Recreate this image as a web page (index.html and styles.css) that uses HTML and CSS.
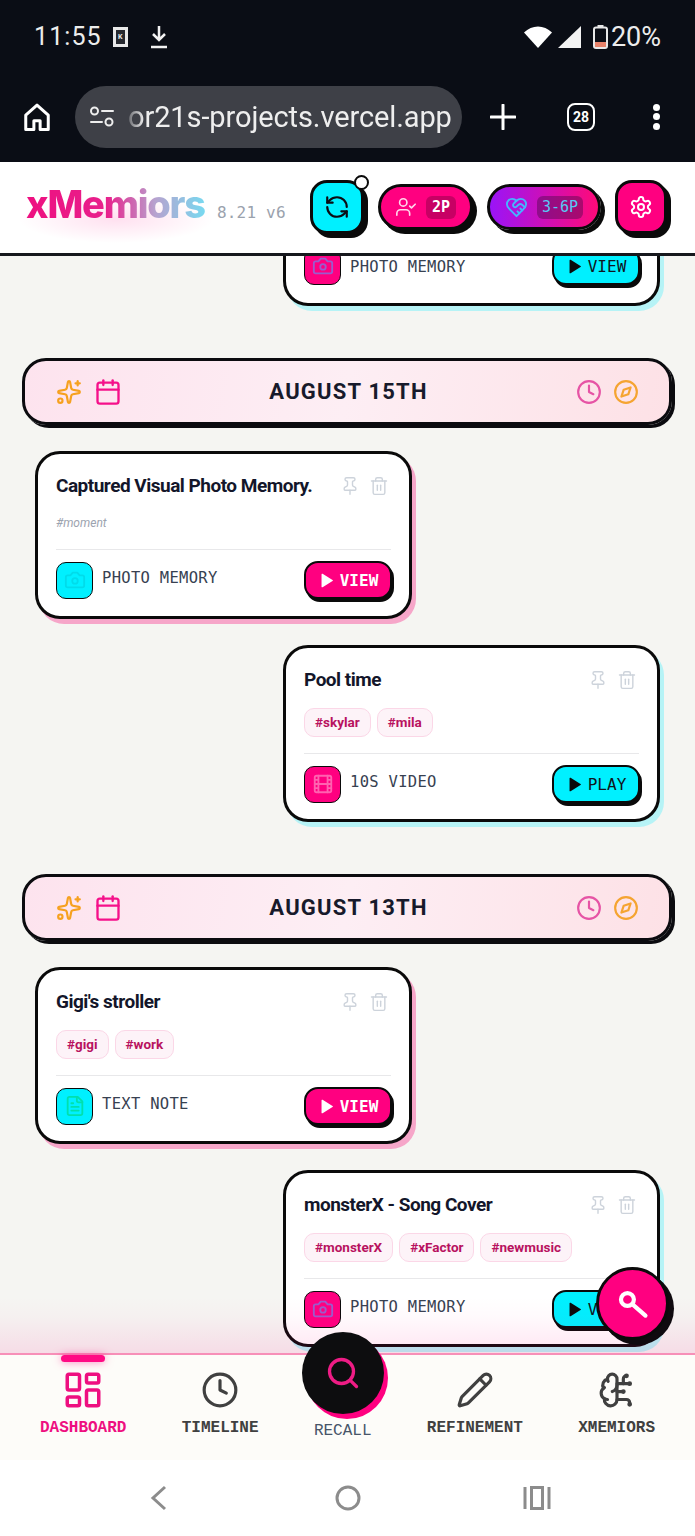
FILE: index.html
```html
<!DOCTYPE html>
<html lang="en">
<head>
<meta charset="utf-8">
<title>xMemiors</title>
<link rel="stylesheet" href="styles.css">
</head>
<body>
<svg class="defs" width="0" height="0" aria-hidden="true">
  <symbol id="i-home" viewBox="0 0 24 24"><path d="M3 10.5 12 2.5l9 8V22h-6.5v-7h-5v7H3z"/></symbol>
  <symbol id="i-sliders" viewBox="0 0 28 24"><circle cx="6.500" cy="6" r="3.500"/><path d="M14 6h11M3 17h11"/><circle cx="21" cy="17" r="3.500"/></symbol>
  <symbol id="i-refresh" viewBox="0 0 24 24"><path d="M21 12a9 9 0 0 0-9-9 9.750 9.750 0 0 0-6.740 2.740L3 8"/><path d="M3 3v5h5"/><path d="M3 12a9 9 0 0 0 9 9 9.750 9.750 0 0 0 6.740-2.740L21 16"/><path d="M16 16h5v5"/></symbol>
  <symbol id="i-usercheck" viewBox="0 0 24 24"><path d="M16 21v-2a4 4 0 0 0-4-4H6a4 4 0 0 0-4 4v2"/><circle cx="9" cy="7" r="4"/><path d="m16 11 2 2 4-4"/></symbol>
  <symbol id="i-heart" viewBox="0 0 24 24"><path d="M19 14c1.490-1.460 3-3.210 3-5.500A5.500 5.500 0 0 0 16.500 3c-1.760 0-3 .5-4.500 2-1.500-1.500-2.740-2-4.500-2A5.500 5.500 0 0 0 2 8.500c0 2.300 1.500 4.050 3 5.500l7 7Z"/><path d="M12 5 9.040 7.960a2.170 2.170 0 0 0 0 3.080c.82.82 2.130.85 3 .07l2.070-1.900a2.820 2.820 0 0 1 3.790 0l2.960 2.660"/><path d="m18 15-2-2"/><path d="m15 18-2-2"/></symbol>
  <symbol id="i-settings" viewBox="0 0 24 24"><path d="M12.220 2h-.44a2 2 0 0 0-2 2v.18a2 2 0 0 1-1 1.730l-.43.25a2 2 0 0 1-2 0l-.15-.08a2 2 0 0 0-2.730.73l-.22.38a2 2 0 0 0 .73 2.730l.15.1a2 2 0 0 1 1 1.720v.51a2 2 0 0 1-1 1.740l-.15.09a2 2 0 0 0-.73 2.730l.22.38a2 2 0 0 0 2.730.73l.15-.08a2 2 0 0 1 2 0l.43.25a2 2 0 0 1 1 1.730V20a2 2 0 0 0 2 2h.44a2 2 0 0 0 2-2v-.18a2 2 0 0 1 1-1.730l.43-.25a2 2 0 0 1 2 0l.15.08a2 2 0 0 0 2.730-.73l.22-.39a2 2 0 0 0-.73-2.730l-.15-.08a2 2 0 0 1-1-1.740v-.5a2 2 0 0 1 1-1.740l.15-.09a2 2 0 0 0 .73-2.730l-.22-.38a2 2 0 0 0-2.730-.73l-.15.08a2 2 0 0 1-2 0l-.43-.25a2 2 0 0 1-1-1.730V4a2 2 0 0 0-2-2z"/><circle cx="12" cy="12" r="3"/></symbol>
  <symbol id="i-sparkles" viewBox="0 0 24 24"><path d="M11.017 2.814a1 1 0 0 1 1.966 0l1.051 5.558a2 2 0 0 0 1.594 1.594l5.558 1.051a1 1 0 0 1 0 1.966l-5.558 1.051a2 2 0 0 0-1.594 1.594l-1.051 5.558a1 1 0 0 1-1.966 0l-1.051-5.558a2 2 0 0 0-1.594-1.594l-5.558-1.051a1 1 0 0 1 0-1.966l5.558-1.051a2 2 0 0 0 1.594-1.594z"/><path d="M20 2v4"/><path d="M22 4h-4"/><circle cx="4" cy="20" r="2"/></symbol>
  <symbol id="i-calendar" viewBox="0 0 24 24"><path d="M8 2v4"/><path d="M16 2v4"/><rect x="3" y="4" width="18" height="18" rx="2"/><path d="M3 10h18"/></symbol>
  <symbol id="i-clock" viewBox="0 0 24 24"><circle cx="12" cy="12" r="10"/><path d="M12 6v6l4 2"/></symbol>
  <symbol id="i-compass" viewBox="0 0 24 24"><circle cx="12" cy="12" r="10"/><path d="m16.240 7.760-2.120 6.360-6.360 2.120 2.120-6.360z"/></symbol>
  <symbol id="i-pin" viewBox="0 0 24 24"><path d="M12 17v5"/><path d="M9 10.760a2 2 0 0 1-1.110 1.790l-1.780.9A2 2 0 0 0 5 15.240V16a1 1 0 0 0 1 1h12a1 1 0 0 0 1-1v-.76a2 2 0 0 0-1.110-1.790l-1.780-.9A2 2 0 0 1 15 10.760V7a1 1 0 0 1 1-1 2 2 0 0 0 0-4H8a2 2 0 0 0 0 4 1 1 0 0 1 1 1z"/></symbol>
  <symbol id="i-trash" viewBox="0 0 24 24"><path d="M3 6h18"/><path d="M19 6v14c0 1-1 2-2 2H7c-1 0-2-1-2-2V6"/><path d="M8 6V4c0-1 1-2 2-2h4c1 0 2 1 2 2v2"/><path d="M10 11v6"/><path d="M14 11v6"/></symbol>
  <symbol id="i-camera" viewBox="0 0 24 24"><path d="M14.500 4h-5L7 7H4a2 2 0 0 0-2 2v9a2 2 0 0 0 2 2h16a2 2 0 0 0 2-2V9a2 2 0 0 0-2-2h-3l-2.500-3z"/><circle cx="12" cy="13" r="3"/></symbol>
  <symbol id="i-film" viewBox="0 0 24 24"><rect x="3" y="3" width="18" height="18" rx="2"/><path d="M7 3v18M3 7.500h4M3 12h18M3 16.500h4M17 3v18M17 7.500h4M17 16.500h4"/></symbol>
  <symbol id="i-file" viewBox="0 0 24 24"><path d="M15 2H6a2 2 0 0 0-2 2v16a2 2 0 0 0 2 2h12a2 2 0 0 0 2-2V7Z"/><path d="M14 2v4a2 2 0 0 0 2 2h4"/><path d="M10 9H8"/><path d="M16 13H8"/><path d="M16 17H8"/></symbol>
  <symbol id="i-play" viewBox="0 0 24 24"><path d="M5 3.500a1 1 0 0 1 1.500-.86l14 8.500a1 1 0 0 1 0 1.720l-14 8.500A1 1 0 0 1 5 21z"/></symbol>
  <symbol id="i-dash" viewBox="0 0 24 24"><rect x="3" y="3" width="7" height="9" rx="1"/><rect x="14" y="3" width="7" height="5" rx="1"/><rect x="14" y="12" width="7" height="9" rx="1"/><rect x="3" y="16" width="7" height="5" rx="1"/></symbol>
  <symbol id="i-search" viewBox="0 0 24 24"><circle cx="11" cy="11" r="8"/><path d="m21 21-4.300-4.300"/></symbol>
  <symbol id="i-pencil" viewBox="0 0 24 24"><path d="M21.174 6.812a1 1 0 0 0-3.986-3.987L3.842 16.174a2 2 0 0 0-.5.83l-1.321 4.352a.5.5 0 0 0 .623.622l4.353-1.32a2 2 0 0 0 .83-.497z"/><path d="m15 5 4 4"/></symbol>
  <symbol id="i-brain" viewBox="0 0 24 24"><path d="M12 5a3 3 0 1 0-5.997.125 4 4 0 0 0-2.526 5.770 4 4 0 0 0 .556 6.588A4 4 0 1 0 12 18Z"/><path d="M9 13a4.500 4.500 0 0 0 3-4"/><path d="M6.003 5.125A3 3 0 0 0 6.401 6.500"/><path d="M3.477 10.896a4 4 0 0 1 .585-.396"/><path d="M6 18a4 4 0 0 1-1.967-.516"/><path d="M12 13h4"/><path d="M12 18h6a2 2 0 0 1 2 2v1"/><path d="M12 8h8"/><path d="M16 8V5a2 2 0 0 1 2-2"/><circle cx="16" cy="13" r=".5"/><circle cx="18" cy="3" r=".5"/><circle cx="20" cy="21" r=".5"/><circle cx="20" cy="8" r=".5"/></symbol>
</svg>

<div class="screen">
  <div class="chrome">
    <div class="status">
      <div class="status-left">
        <span class="time">11:55</span>
        <span class="kbox"><span class="kbox-in">K</span></span>
        <svg class="dl" viewBox="0 0 20 24"><path d="M10 1v13M4 9l6 6 6-6M2 22h16"/></svg>
      </div>
      <div class="status-right">
        <svg class="wifi" viewBox="0 0 28 22"><path d="M0 6.500C4 2.500 9 .5 14 .5s10 2 14 6L14 22z"/></svg>
        <svg class="signal" viewBox="0 0 24 22"><path d="M23 0v22H0z"/></svg>
        <svg class="battery" viewBox="0 0 15 24"><rect x="4.500" y="0" width="6" height="3" fill="#e8e8e8"/><rect x="1" y="2.500" width="13" height="20.500" rx="2" fill="none" stroke="#e8e8e8" stroke-width="2"/><rect x="2" y="17" width="11" height="5" fill="#e8826a"/></svg>
        <span class="pct">20%</span>
      </div>
    </div>
    <div class="toolbar">
      <svg class="ic tb-home"><use href="#i-home"/></svg>
      <div class="urlbar">
        <svg class="ic tune"><use href="#i-sliders"/></svg>
        <span class="url">or21s-projects.vercel.app</span>
      </div>
      <svg class="plus" viewBox="0 0 26 26"><path d="M13 1v24M1 13h24"/></svg>
      <span class="tabs">28</span>
      <span class="dots"><i></i><i></i><i></i></span>
    </div>
  </div>

  <header class="app-header">
    <div class="brand">
      <span class="logo">xMemiors</span>
      <span class="ver">8.21 v6</span>
    </div>
    <div class="actions">
      <button class="hbtn hbtn-sync"><svg class="ic"><use href="#i-refresh"/></svg><span class="dot"></span></button>
      <button class="hbtn hbtn-2p"><svg class="ic"><use href="#i-usercheck"/></svg><span class="chip">2P</span></button>
      <button class="hbtn hbtn-6p"><svg class="ic"><use href="#i-heart"/></svg><span class="chip">3-6P</span></button>
      <button class="hbtn hbtn-set"><svg class="ic"><use href="#i-settings"/></svg></button>
    </div>
  </header>

  <main class="feed">
    <div class="feed-list">
      <article class="card card-right card-first">
        <div class="card-foot">
          <div class="kind"><span class="kind-ic kind-pink"><svg class="ic ic-cam"><use href="#i-camera"/></svg></span><span class="kind-label">PHOTO MEMORY</span></div>
          <button class="go go-cyan"><svg class="ic-play"><use href="#i-play"/></svg>VIEW</button>
        </div>
      </article>

      <section class="day">
        <div class="day-side"><svg class="ic ic-spark"><use href="#i-sparkles"/></svg><svg class="ic ic-cal"><use href="#i-calendar"/></svg></div>
        <h2 class="day-title">AUGUST 15TH</h2>
        <div class="day-side day-side-r"><svg class="ic ic-clk"><use href="#i-clock"/></svg><svg class="ic ic-cmp"><use href="#i-compass"/></svg></div>
      </section>

      <article class="card card-left card-short">
        <div class="card-head"><h3 class="card-title">Captured Visual Photo Memory.</h3><div class="card-tools"><svg class="ic"><use href="#i-pin"/></svg><svg class="ic"><use href="#i-trash"/></svg></div></div>
        <p class="note">#moment</p>
        <div class="card-foot">
          <div class="kind"><span class="kind-ic kind-cyan"><svg class="ic ic-camc"><use href="#i-camera"/></svg></span><span class="kind-label">PHOTO MEMORY</span></div>
          <button class="go go-pink"><svg class="ic-play"><use href="#i-play"/></svg>VIEW</button>
        </div>
      </article>

      <article class="card card-right">
        <div class="card-head"><h3 class="card-title">Pool time</h3><div class="card-tools"><svg class="ic"><use href="#i-pin"/></svg><svg class="ic"><use href="#i-trash"/></svg></div></div>
        <div class="tags"><span class="tag">#skylar</span><span class="tag">#mila</span></div>
        <div class="card-foot">
          <div class="kind"><span class="kind-ic kind-pink"><svg class="ic ic-film"><use href="#i-film"/></svg></span><span class="kind-label">10S VIDEO</span></div>
          <button class="go go-cyan"><svg class="ic-play"><use href="#i-play"/></svg>PLAY</button>
        </div>
      </article>

      <section class="day">
        <div class="day-side"><svg class="ic ic-spark"><use href="#i-sparkles"/></svg><svg class="ic ic-cal"><use href="#i-calendar"/></svg></div>
        <h2 class="day-title">AUGUST 13TH</h2>
        <div class="day-side day-side-r"><svg class="ic ic-clk"><use href="#i-clock"/></svg><svg class="ic ic-cmp"><use href="#i-compass"/></svg></div>
      </section>

      <article class="card card-left">
        <div class="card-head"><h3 class="card-title">Gigi's stroller</h3><div class="card-tools"><svg class="ic"><use href="#i-pin"/></svg><svg class="ic"><use href="#i-trash"/></svg></div></div>
        <div class="tags"><span class="tag">#gigi</span><span class="tag">#work</span></div>
        <div class="card-foot">
          <div class="kind"><span class="kind-ic kind-cyan"><svg class="ic ic-file"><use href="#i-file"/></svg></span><span class="kind-label">TEXT NOTE</span></div>
          <button class="go go-pink"><svg class="ic-play"><use href="#i-play"/></svg>VIEW</button>
        </div>
      </article>

      <article class="card card-right">
        <div class="card-head"><h3 class="card-title">monsterX - Song Cover</h3><div class="card-tools"><svg class="ic"><use href="#i-pin"/></svg><svg class="ic"><use href="#i-trash"/></svg></div></div>
        <div class="tags"><span class="tag">#monsterX</span><span class="tag">#xFactor</span><span class="tag">#newmusic</span></div>
        <div class="card-foot">
          <div class="kind"><span class="kind-ic kind-pink"><svg class="ic ic-cam"><use href="#i-camera"/></svg></span><span class="kind-label">PHOTO MEMORY</span></div>
          <button class="go go-cyan"><svg class="ic-play"><use href="#i-play"/></svg>VIEW</button>
        </div>
      </article>
    </div>
    <div class="feed-fade"></div>
  </main>

  <button class="fab" aria-label="Search">
    <svg class="fab-ic" viewBox="0 0 24 24"><circle cx="8.300" cy="9" r="4.300"/><path d="m11.700 12.300 8.600 7.400"/></svg>
  </button>

  <nav class="tabbar">
    <a class="tab tab-on"><span class="tab-bar"></span><svg class="ic tab-ic tab-ic-dash"><use href="#i-dash"/></svg><span class="tab-label">DASHBOARD</span></a>
    <a class="tab"><svg class="ic tab-ic"><use href="#i-clock"/></svg><span class="tab-label">TIMELINE</span></a>
    <a class="tab tab-recall"><span class="recall-disc"><svg class="ic"><use href="#i-search"/></svg></span><span class="tab-label">RECALL</span></a>
    <a class="tab"><svg class="ic tab-ic"><use href="#i-pencil"/></svg><span class="tab-label">REFINEMENT</span></a>
    <a class="tab"><svg class="ic tab-ic"><use href="#i-brain"/></svg><span class="tab-label">XMEMIORS</span></a>
  </nav>

  <div class="sysnav">
    <svg class="sys" viewBox="0 0 30 30"><path d="M21 4 9 15l12 11"/></svg>
    <svg class="sys" viewBox="0 0 30 30"><circle cx="15" cy="15" r="11"/></svg>
    <svg class="sys" viewBox="0 0 30 30"><path d="M3 4v22M27 4v22"/><rect x="9.500" y="4.500" width="11" height="21"/></svg>
  </div>
</div>
</body>
</html>
```

FILE: styles.css
```css
* { box-sizing: border-box; margin: 0; padding: 0; }
html, body { width: 695px; height: 1536px; overflow: hidden; background: #fff; }
body { font-family: "Roboto", "Liberation Sans", sans-serif; }
.defs { position: absolute; }
button { font: inherit; cursor: pointer; }
.ic { fill: none; stroke: currentColor; stroke-width: 2; stroke-linecap: round; stroke-linejoin: round; display: block; flex: none; }

.screen { width: 695px; height: 1536px; display: flex; flex-direction: column; position: relative; overflow: hidden; }

/* Browser chrome */
.chrome { height: 162px; flex: none; background: #0a0d15; color: #ececec; }
.status { height: 71px; display: flex; justify-content: space-between; align-items: center; padding: 2px 34px 0 34px; }
.status-left, .status-right { display: flex; align-items: center; }
.time { font-size: 25px; letter-spacing: 1.100px; line-height: 30px; }
.kbox { width: 15px; height: 20px; margin-left: 11px; background: #e8e8e8; display: flex; align-items: center; justify-content: center; }
.kbox-in { width: 9px; height: 14px; background: #26282e; color: #e8e8e8; font-size: 7px; font-weight: 700; line-height: 14px; text-align: center; }
.dl { width: 20px; height: 24px; margin-left: 21px; fill: none; stroke: #f2f2f2; stroke-width: 2.500; }
.wifi { width: 28px; height: 22px; fill: #fff; }
.signal { width: 24px; height: 22px; margin-left: 6px; fill: #f2f2f2; }
.battery { width: 15px; height: 24px; margin-left: 11px; }
.pct { font-size: 27px; margin-left: 3px; line-height: 30px; }

.toolbar { height: 91px; display: flex; align-items: center; position: relative; }
.tb-home { width: 30px; height: 30px; margin-left: 22px; stroke-width: 2.400; color: #fff; }
.urlbar { width: 387px; height: 62px; margin-left: 23px; border-radius: 31px; background: #3e4047; display: flex; align-items: center; padding-left: 13px; }
.tune { width: 28px; height: 24px; color: #eee; stroke-width: 2; }
.url { font-size: 29px; color: #eee; margin-left: 12px; white-space: nowrap; letter-spacing: -.1px; -webkit-mask-image: linear-gradient(90deg, rgba(0, 0, 0, .25), #000 16px); mask-image: linear-gradient(90deg, rgba(0, 0, 0, .25), #000 16px); }
.plus { width: 26px; height: 26px; margin-left: 28px; fill: none; stroke: #fff; stroke-width: 3; stroke-linecap: round; flex: none; }
.tabs { width: 28px; height: 28px; margin-left: 51px; border: 2.500px solid #fff; border-radius: 8px; font-size: 14px; font-weight: 700; color: #fff; display: flex; align-items: center; justify-content: center; flex: none; }
.dots { margin-left: 58px; display: flex; flex-direction: column; gap: 2.500px; }
.dots i { display: block; width: 7px; height: 7px; border-radius: 50%; background: #fff; }

/* App header */
.app-header { height: 94px; flex: none; background: #fff; border-bottom: 3px solid #16181d; display: flex; align-items: center; padding: 0 28px 3px 26px; }
.brand { display: flex; align-items: baseline; position: relative; margin-top: -4px; }
.brand::after { content: ""; position: absolute; left: -8px; top: 14px; width: 196px; height: 48px; background: radial-gradient(closest-side, rgba(255, 0, 128, .12), rgba(255, 0, 128, 0)); }
.logo { font-family: "Inter", "Roboto", sans-serif; font-weight: 800; font-size: 38px; letter-spacing: -1.200px; line-height: 46px; background: linear-gradient(90deg, #ee0f80 0%, #e8208c 45%, #b7a2cf 72%, #78d9f0 100%); -webkit-background-clip: text; background-clip: text; color: transparent; position: relative; z-index: 1; }
.ver { font-family: "DejaVu Sans Mono", monospace; font-size: 16px; color: #9aa2ad; margin-left: 12px; letter-spacing: .2px; position: relative; z-index: 1; }
.actions { margin-left: auto; display: flex; align-items: center; gap: 14px; margin-top: 2px; }
.hbtn { position: relative; border: 3px solid #0a0a0a; box-shadow: 4px 4px 0 #0a0a0a; display: flex; align-items: center; justify-content: center; color: #fff; }
.hbtn-sync { width: 54px; height: 54px; border-radius: 17px; background: #00f0ff; color: #0c0c14; }
.hbtn-sync .ic { width: 26px; height: 26px; }
.dot { position: absolute; right: -8px; top: -8px; width: 15px; height: 15px; border-radius: 50%; background: #fff; border: 2px solid #0a0a0a; }
.hbtn-2p { width: 95px; height: 46px; border-radius: 23px; background: #ff0080; gap: 9px; }
.hbtn-2p .ic { width: 22px; height: 22px; stroke-width: 1.800; color: #ffd6ea; }
.hbtn-6p { width: 114px; height: 46px; border-radius: 23px; background: linear-gradient(90deg, #9a14f8, #ff0a78); gap: 9px; }
.hbtn-6p .ic { width: 23px; height: 23px; color: #45b6ff; }
.chip { font-family: "DejaVu Sans Mono", monospace; font-weight: 700; font-size: 15px; line-height: 23px; padding: 0 6px; border-radius: 6px; background: rgba(80, 0, 40, .32); }
.hbtn-6p .chip { color: #57c8f5; background: rgba(70, 10, 70, .42); font-weight: 400; padding: 0 5px; }
.hbtn-set { width: 52px; height: 54px; border-radius: 17px; background: #ff0080; }
.hbtn-set .ic { width: 24px; height: 24px; }

/* Feed */
.feed { flex: 1; min-height: 0; background: #f5f5f2; overflow: hidden; position: relative; }
.feed-list { padding: 0 23px 0 22px; display: flex; flex-direction: column; }
.feed-fade { position: absolute; left: 0; right: 0; bottom: 0; height: 56px; background: linear-gradient(180deg, rgba(255, 0, 128, 0), rgba(255, 0, 128, .02) 35%, rgba(255, 0, 128, .1)); }

.day { height: 67px; flex: none; margin-top: 52px; border: 3px solid #0b0b0f; border-radius: 24px; box-shadow: 3px 3px 0 #0b0b0f; background: linear-gradient(100deg, #fde3ee 0%, #fdeef4 50%, #fde1e6 100%); display: flex; align-items: center; justify-content: space-between; padding: 0 30px 0 31px; }
.day-side { display: flex; align-items: center; gap: 12px; width: 132px; margin-top: 1px; }
.day-side-r { justify-content: flex-end; gap: 11px; width: 130px; }
.day-title { font-size: 22px; font-weight: 700; letter-spacing: 1.200px; color: #171a2b; }
.ic-spark { width: 26px; height: 26px; color: #f6a11f; }
.ic-cal { width: 28px; height: 28px; color: #f5108a; }
.ic-clk { width: 26px; height: 26px; color: #e654a5; }
.ic-cmp { width: 26px; height: 26px; color: #f5a431; }

.card { width: 377px; height: 177px; flex: none; background: #fff; border: 3px solid #0a0a0a; border-radius: 25px; padding: 20px 18px 0 18px; margin-top: 26px; }
.card-left { margin-left: 13px; box-shadow: 4px 5px 0 #f6a6c9; }
.card-right { margin-left: auto; margin-right: 12px; box-shadow: 4px 5px 0 #b6f3f6; }
.day + .card { margin-top: 26px; }
.card-short { height: 168px; }
.card-first { margin-top: -127px; display: flex; flex-direction: column; justify-content: flex-end; padding-bottom: 18px; }
.card-first .kind-label { margin-top: 1px; }
.card-head { display: flex; justify-content: space-between; align-items: center; height: 24px; }
.card-title { font-size: 19px; font-weight: 700; letter-spacing: -.5px; color: #13162a; line-height: 24px; white-space: nowrap; }
.card-tools { display: flex; gap: 9px; color: #cdd3db; padding-right: 2px; }
.card-tools .ic { width: 20px; height: 20px; stroke-width: 1.700; }
.tags { display: flex; gap: 6px; margin-top: 16px; height: 29px; }
.tag { height: 29px; padding: 0 10px; border: 1px solid #fbd7e7; border-radius: 10px; background: #fdf3f8; color: #b8125f; font-size: 13.500px; font-weight: 700; line-height: 27px; }
.note { margin-top: 16px; height: 19px; font-size: 12px; font-style: italic; color: #9ca3af; line-height: 19px; }
.card-foot { margin-top: 16px; border-top: 1px solid #e8e8ea; padding-top: 11px; display: flex; justify-content: space-between; align-items: center; }
.kind { display: flex; align-items: center; gap: 9px; }
.kind-ic { width: 37px; height: 37px; border: 1.500px solid #0a0a0a; border-radius: 10px; display: flex; align-items: center; justify-content: center; }
.kind-ic .ic { width: 22px; height: 22px; stroke-width: 2; }
.kind-pink { background: #ff0080; }
.kind-cyan { background: #00f0ff; }
.ic-cam { color: #9a5ccd; }
.ic-camc { color: #00dcea; }
.ic-film { color: #ff62b0; }
.ic-file { color: #00e0ac; }
.kind-label { font-family: "DejaVu Sans Mono", monospace; font-size: 15.500px; letter-spacing: .3px; color: #374151; margin-top: -5px; white-space: pre; }
.go { width: 88px; height: 38px; margin-right: -1px; border: 2px solid #0a0a0a; border-radius: 14px; box-shadow: 2px 3px 0 #0a0a0a; display: flex; align-items: center; justify-content: center; gap: 5px; font-family: "DejaVu Sans Mono", monospace; font-weight: 700; font-size: 16px; }
.ic-play { width: 17px; height: 17px; fill: currentColor; flex: none; }
.go-pink { background: #ff0080; color: #fff; }
.go-cyan { background: #00f0ff; color: #0f1520; font-weight: 400; }
.go-cyan .ic-play { color: #0a0a0a; }

/* FAB */
.fab { position: absolute; left: 596px; top: 1267px; width: 73px; height: 73px; border-radius: 50%; background: #ff0080; border: 3px solid #0a0a0a; box-shadow: 5px 5px 0 #0f0a0f; z-index: 5; display: flex; align-items: center; justify-content: center; }
.fab-ic { width: 36px; height: 36px; fill: none; stroke: #fff; stroke-width: 2.800; stroke-linecap: round; }

/* Tab bar */
.tabbar { height: 107px; flex: none; position: relative; z-index: 4; background: #fdfcf9; border-top: 2px solid #f78fb8; display: flex; justify-content: space-between; padding: 16px 40px 0; }
.tab { position: relative; display: flex; flex-direction: column; align-items: center; color: #404040; }
.tab-ic { width: 38px; height: 38px; stroke-width: 2; }
.tab-ic-dash { width: 42px; height: 42px; margin: -2px 0; }
.tab-label { font-family: "Liberation Mono", monospace; font-weight: 700; font-size: 16px; line-height: 20px; margin-top: 9px; }
.tab-on { color: #ee0f80; }
.tab-bar { position: absolute; top: -16px; left: 50%; margin-left: -22px; width: 44px; height: 7px; border-radius: 4px; background: #ff0a84; box-shadow: 0 0 8px rgba(255, 0, 128, .5); }
.tab-recall { color: #475569; padding-top: 50px; }
.tab-recall .tab-label { font-weight: 400; margin-top: 0; }
.recall-disc { position: absolute; left: 50%; top: -39px; margin-left: -41px; width: 82px; height: 82px; border-radius: 50%; background: #0d0d0f; box-shadow: 4px 5px 0 #ff0080; display: flex; align-items: center; justify-content: center; color: #ee1c85; }
.recall-disc .ic { width: 36px; height: 36px; stroke-width: 2.200; }

/* System nav */
.sysnav { height: 76px; flex: none; background: #fff; display: flex; justify-content: center; align-items: center; gap: 159px; }
.sys { width: 30px; height: 30px; fill: none; stroke: #8c8c8c; stroke-width: 3; }
```
